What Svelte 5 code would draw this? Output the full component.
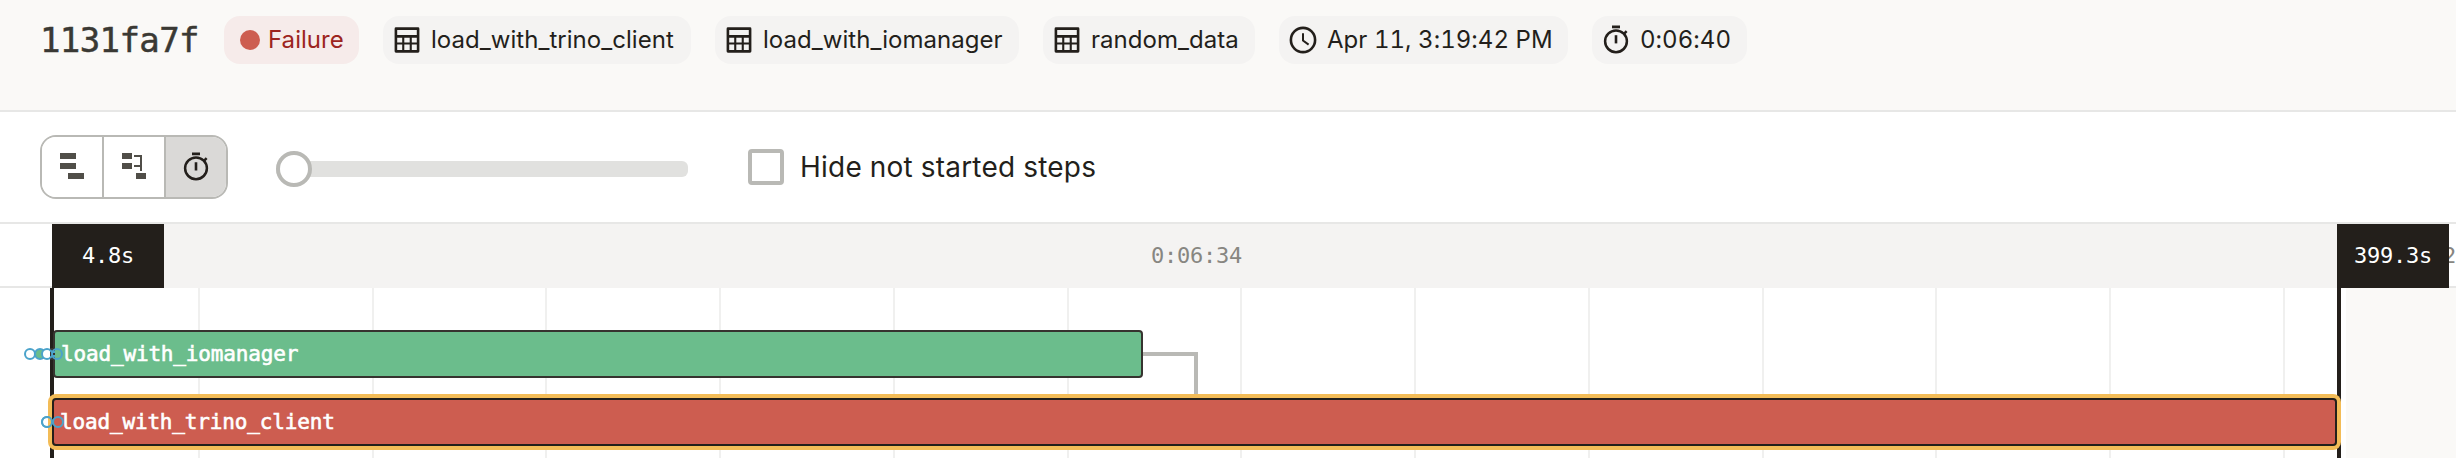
<script>
  const tags = [
    { icon: 'table', text: 'load_with_trino_client', width: 308 },
    { icon: 'table', text: 'load_with_iomanager', width: 304 },
    { icon: 'table', text: 'random_data', width: 212 },
    { icon: 'clock', text: 'Apr 11, 3:19:42 PM', width: 289 },
    { icon: 'timer', text: '0:06:40', width: 155 }
  ];
  const gridLines = Array.from({ length: 13 }, (_, i) => Math.floor(198.5 + i * 173.74));
</script>

{#snippet timer()}
  <svg width="32" height="32" viewBox="0 0 32 32" fill="none" stroke="#231f1b">
    <circle cx="16" cy="17.3" r="10.9" stroke-width="2.5" />
    <path d="M12 2.9h8" stroke-width="2.8" />
    <path d="M16 11.2v8.2" stroke-width="2.6" />
    <path d="M24 9.8l2.6-2.6" stroke-width="2.5" />
  </svg>
{/snippet}

<div class="page">
  <header>
    <h1>1131fa7f</h1>
    <div class="tag failure"><i></i><span>Failure</span></div>
    {#each tags as tag}
      <div class="tag" style="width: {tag.width}px">
        {#if tag.icon === 'table'}
          <svg width="32" height="32" viewBox="0 0 32 32" fill="#231f1b">
            <path fill-rule="evenodd" d="M5 3.3h22q1.4 0 1.4 1.4v22.6q0 1.4-1.4 1.4H5q-1.4 0-1.4-1.4V4.7q0-1.4 1.4-1.4ZM6.2 6v5h19.6V6ZM6.2 13.7v4.7h5v-4.7ZM13.3 13.7v4.7h5.4v-4.7ZM20.8 13.7v4.7h5v-4.7ZM6.2 20.6v5.4h5v-5.4ZM13.3 20.6v5.4h5.4v-5.4ZM20.8 20.6v5.4h5v-5.4Z" />
          </svg>
        {:else if tag.icon === 'clock'}
          <svg width="32" height="32" viewBox="0 0 32 32" fill="none" stroke="#231f1b">
            <circle cx="16" cy="16" r="12.1" stroke-width="2.6" />
            <path d="M16 9.2v7.4l5.6 4" stroke-width="2" />
          </svg>
        {:else}
          {@render timer()}
        {/if}
        <span>{tag.text}</span>
      </div>
    {/each}
  </header>

  <div class="toolbar">
    <div class="modes">
      <button aria-label="Flat">
        <svg width="32" height="32" viewBox="0 0 32 32" fill="#504e48">
          <path d="M4 2h16v6H4zM4 12h16v6H4zM12 22h16v6H12z" />
        </svg>
      </button>
      <button aria-label="Waterfall">
        <svg width="32" height="32" viewBox="0 0 32 32" fill="#504e48">
          <path d="M4 2h10v6H4zM4 12h10v6H4zM18 22h10v6H18zM16 4h8v16h-2v-4h-6v-2h6V6h-6z" />
        </svg>
      </button>
      <button class="active" aria-label="Timed">{@render timer()}</button>
    </div>
    <div class="slider"><div class="handle"></div></div>
    <div class="check"><i></i><span>Hide not started steps</span></div>
  </div>

  <div class="scale">
    <div class="pad"></div>
    <div class="stamp mono">4.8s</div>
    <div class="span mono">0:06:34</div>
    <div class="stamp mono">399.3s</div>
    <div class="rest mono"><span>2</span></div>
  </div>

  <div class="chart">
    <div class="after"></div>
    {#each gridLines as x}
      <div class="grid" style="left: {x}px"></div>
    {/each}
    <div class="edge start"></div>
    <div class="edge end"></div>
    <div class="link"></div>
    <div class="bar ok"><span>load_with_iomanager</span></div>
    <div class="bar bad"><span>load_with_trino_client</span></div>
    <svg class="markers" width="80" height="170" viewBox="0 0 80 170" fill="none" stroke="#4ba3cb" stroke-width="2">
      <circle cx="30" cy="66" r="5" fill="#fff" />
      <circle cx="40" cy="66" r="5" fill="#6bbd8c" />
      <circle cx="47" cy="66" r="5" fill="#fff" />
      <path d="M50 60h4v12h-4z" fill="#36332f" stroke="none" />
      <path d="M50 62l2 2h3M50 70l2-2h3" />
      <circle cx="57" cy="66" r="5" />
      <circle cx="47" cy="134" r="5" fill="#fff" />
      <path d="M48 130h4v8h-4z" fill="#f3bc57" stroke="none" />
      <circle cx="47" cy="134" r="5" />
      <circle cx="58" cy="134" r="5" fill="#cd5d50" />
    </svg>
  </div>
</div>

<style>
  .page {
    width: 2456px;
    height: 458px;
    overflow: hidden;
    background: #fff;
    color: #231f1b;
    font-family: Inter, sans-serif;
    font-variant-numeric: tabular-nums;
    display: flex;
    flex-direction: column;
  }
  .page * { box-sizing: border-box; }
  header {
    height: 112px;
    background: #faf9f7;
    border-bottom: 2px solid #e7e7e6;
    display: flex;
    gap: 24px;
    padding: 16px 40px;
    flex: none;
  }
  h1 {
    margin: 0;
    width: 160px;
    font: 400 34px/49px "DejaVu Sans Mono", monospace;
    letter-spacing: -0.6px;
    color: #3a3934;
    -webkit-text-stroke: 0.5px #3a3934;
    white-space: nowrap;
  }
  .tag {
    height: 48px;
    border-radius: 16px;
    background: #f4f3f2;
    display: flex;
    align-items: center;
    gap: 8px;
    padding: 0 8px;
    font-size: 24px;
    line-height: 48px;
    letter-spacing: 0.04px;
    white-space: nowrap;
    flex: none;
  }
  .tag.failure {
    width: 135px;
    padding-left: 16px;
    background: #f6ebea;
    color: #9c2420;
  }
  .failure i {
    width: 20px;
    height: 20px;
    border-radius: 50%;
    background: #cd5d50;
  }
  .toolbar {
    height: 112px;
    border-bottom: 2px solid #e7e7e6;
    display: flex;
    align-items: center;
    padding: 0 40px;
    flex: none;
  }
  .modes {
    width: 188px;
    height: 64px;
    border: 2px solid #b9b9b5;
    border-radius: 16px;
    overflow: hidden;
    display: flex;
  }
  button {
    flex: none;
    width: 62px;
    height: 60px;
    padding: 0;
    border: 0;
    background: #fff;
    display: flex;
    align-items: center;
    justify-content: center;
  }
  button + button { border-left: 2px solid #b9b9b5; }
  button:nth-child(1) { width: 60px; }
  button.active { background: #dad9d7; }
  .slider {
    width: 412px;
    height: 16px;
    margin: 4px 0 0 48px;
    border-radius: 6px;
    background: #e1e1df;
    display: flex;
    align-items: center;
  }
  .handle {
    width: 36px;
    height: 36px;
    border: 4px solid #b9b9b5;
    border-radius: 50%;
    background: #fff;
  }
  .check {
    margin-left: 60px;
    display: flex;
    align-items: center;
    gap: 16px;
    font-size: 28px;
    line-height: 36px;
    letter-spacing: 0.23px;
    white-space: nowrap;
  }
  .check i {
    width: 36px;
    height: 36px;
    border: 4px solid #b9b9b5;
    border-radius: 4px;
  }
  .mono {
    font: 22px/63px "DejaVu Sans Mono", monospace;
    letter-spacing: -0.25px;
  }
  .scale {
    height: 64px;
    display: flex;
    flex: none;
  }
  .pad { width: 52px; border-bottom: 2px solid #e7e7e6; }
  .stamp {
    width: 112px;
    background: #231f1b;
    color: #fff;
    text-align: center;
  }
  .span {
    width: 2173px;
    background: #f4f3f2;
    color: #878681;
    padding-left: 987px;
  }
  .rest {
    width: 7px;
    overflow: hidden;
    border-bottom: 2px solid #e7e7e6;
    color: #878681;
    display: flex;
    justify-content: flex-end;
  }
  .chart {
    position: relative;
    height: 170px;
    overflow: hidden;
  }
  .chart > * { position: absolute; }
  .after { left: 2346px; right: 0; top: 0; bottom: 0; background: #faf9f7; }
  .grid { width: 2px; top: 0; bottom: 0; background: #f0f0ef; }
  .edge { width: 4px; top: 0; bottom: 0; background: #231f1b; }
  .start { left: 50px; }
  .end { left: 2337px; }
  .link {
    left: 1143px;
    top: 64px;
    width: 55px;
    height: 46px;
    border: solid #b9b9b5;
    border-width: 4px 4px 0 0;
  }
  .bar {
    height: 48px;
    border: 2px solid #36332f;
    border-radius: 4px;
    color: #fff;
    font: 21px/44px "DejaVu Sans Mono", monospace;
    letter-spacing: -0.16px;
    -webkit-text-stroke: 0.6px #fff;
    white-space: nowrap;
  }
  .ok { left: 53px; top: 42px; width: 1090px; background: #6bbd8c; padding-left: 6px; }
  .bad {
    left: 52px;
    top: 110px;
    width: 2285px;
    background: #cd5d50;
    border-color: #231f1b;
    box-shadow: 0 0 0 4px #f3bc57;
    padding-left: 6px;
  }
  .markers { left: 0; top: 0; }
</style>
